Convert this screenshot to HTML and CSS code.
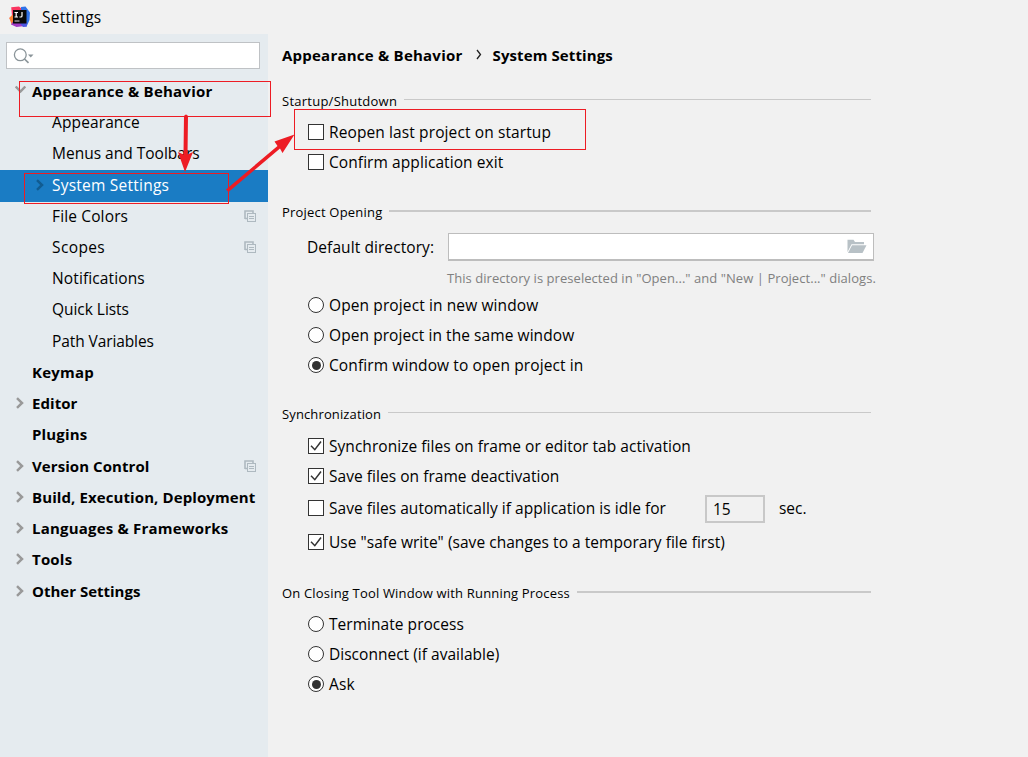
FILE: index.html
```html
<!DOCTYPE html>
<html lang="en">
<head>
<meta charset="utf-8">
<title>Settings</title>
<link rel="stylesheet" href="styles.css">
</head>
<body>
<svg class="defs" width="0" height="0">
  <symbol id="chev" viewBox="0 0 8 12"><path d="M1 1.2 6 6 1 10.8" fill="none" stroke="currentColor" stroke-width="2.5"/></symbol>
  <symbol id="copy" viewBox="0 0 12 12"><path d="M1 9V1H9V3M1 8.500H3" fill="none" stroke="currentColor" stroke-width="1.6"/><rect x="3.5" y="3.5" width="8" height="8" fill="none" stroke="currentColor" stroke-width="1"/><path d="M5 6.500h5M5 8.500h5" stroke="currentColor" stroke-width="1"/></symbol>
  <symbol id="tick" viewBox="0 0 14 14"><path d="M2 6.800 5.800 10.700 12 2.500" fill="none" stroke="#333" stroke-width="1.5"/></symbol>
</svg>
<div class="window">
  <header class="titlebar">
    <svg class="logo" viewBox="0 0 22 22" width="22" height="22">
      <path d="M2.2 1.2 10 .5l3 2.500-1 14-9-1.500L.3 12 3 10z" fill="#fb3560"/>
      <path d="M.3 12 3.500 8.500 6 16l-3.200 3z" fill="#fc8130"/>
      <path d="M12 1 16.500 .6 21 6.500 20.500 14 17.500 20.700 12 17z" fill="#2f72e8"/>
      <path d="M2 18.600 5 14h10l1 6-8.500 1z" fill="#a13ac4"/>
      <path d="M10 16h8l-.5 4.700L14 21z" fill="#4d57e0"/>
      <rect x="4" y="4" width="13.500" height="13.500" fill="#090909"/>
      <path d="M5.500 6.500h3.500M7.200 6.500v4.500M5.500 11h3.500M13 6v4q0 1-1.200 1h-1.300" fill="none" stroke="#fff" stroke-width="1.200"/>
      <path d="M5.500 15h5" stroke="#ddd" stroke-width="1"/>
    </svg>
    <span class="t-settings">Settings</span>
  </header>
  <div class="body">
    <nav class="sidebar">
      <div class="search">
        <svg width="22" height="18" viewBox="0 0 22 18"><circle cx="7.300" cy="7.800" r="5.900" fill="none" stroke="#8a9499" stroke-width="1.300"/><path d="m11.500 12 4 3.800" stroke="#8a9499" stroke-width="1.700"/><path d="M15 7.500h5.500l-2.750 3z" fill="#8a9499"/></svg>
      </div>
      <ul class="tree">
        <li class="top"><svg class="arrow open"><use href="#chev"/></svg><span class="t-ab">Appearance &amp; Behavior</span></li>
        <li class="sub"><span class="t-app">Appearance</span></li>
        <li class="sub"><span class="t-menus">Menus and Toolbars</span></li>
        <li class="sub selected"><svg class="arrow"><use href="#chev"/></svg><span class="t-sys">System Settings</span></li>
        <li class="sub"><span class="t-file">File Colors</span><svg class="copy"><use href="#copy"/></svg></li>
        <li class="sub"><span class="t-scopes">Scopes</span><svg class="copy"><use href="#copy"/></svg></li>
        <li class="sub"><span class="t-notif">Notifications</span></li>
        <li class="sub"><span class="t-quick">Quick Lists</span></li>
        <li class="sub"><span class="t-path">Path Variables</span></li>
        <li class="top"><span class="t-keymap">Keymap</span></li>
        <li class="top"><svg class="arrow"><use href="#chev"/></svg><span class="t-editor">Editor</span></li>
        <li class="top"><span class="t-plugins">Plugins</span></li>
        <li class="top"><svg class="arrow"><use href="#chev"/></svg><span class="t-vc">Version Control</span><svg class="copy"><use href="#copy"/></svg></li>
        <li class="top"><svg class="arrow"><use href="#chev"/></svg><span class="t-build">Build, Execution, Deployment</span></li>
        <li class="top"><svg class="arrow"><use href="#chev"/></svg><span class="t-lang">Languages &amp; Frameworks</span></li>
        <li class="top"><svg class="arrow"><use href="#chev"/></svg><span class="t-tools">Tools</span></li>
        <li class="top"><svg class="arrow"><use href="#chev"/></svg><span class="t-other">Other Settings</span></li>
      </ul>
    </nav>
    <main class="content">
      <h1 class="crumbs"><span class="t-ab">Appearance &amp; Behavior</span><svg width="6" height="11" viewBox="0 0 6 11"><path d="M1 1 4.500 5.500 1 10" fill="none" stroke="#222" stroke-width="1.300"/></svg><span class="t-crumb">System Settings</span></h1>

      <section>
        <h2><span class="t-startup">Startup/Shutdown</span></h2>
        <div class="row"><i class="box"></i><span class="t-reopen">Reopen last project on startup</span></div>
        <div class="row"><i class="box"></i><span class="t-exit">Confirm application exit</span></div>
      </section>

      <section>
        <h2 class="thick"><span class="t-opening">Project Opening</span></h2>
        <div class="directory">
          <span class="t-dir">Default directory:</span>
          <div class="field"><svg width="20" height="15" viewBox="0 0 20 15"><path d="M.5 13V.8h6L8 3h9v2.200H4.500z" fill="#b8c1c6"/><path d="M5 6.200h14.500L15.500 14H1z" fill="#b8c1c6"/></svg></div>
        </div>
        <p class="hint"><span class="t-hint">This directory is preselected in "Open..." and "New | Project..." dialogs.</span></p>
        <div class="row"><i class="radio"></i><span class="t-new">Open project in new window</span></div>
        <div class="row"><i class="radio"></i><span class="t-same">Open project in the same window</span></div>
        <div class="row"><i class="radio on"></i><span class="t-confirm">Confirm window to open project in</span></div>
      </section>

      <section class="sync">
        <h2><span class="t-sync">Synchronization</span></h2>
        <div class="row"><i class="box"><svg><use href="#tick"/></svg></i><span class="t-syncfiles">Synchronize files on frame or editor tab activation</span></div>
        <div class="row"><i class="box"><svg><use href="#tick"/></svg></i><span class="t-deact">Save files on frame deactivation</span></div>
        <div class="row idle"><i class="box"></i><span class="t-idle">Save files automatically if application is idle for</span><div class="seconds"><span>15</span></div><span class="t-sec">sec.</span></div>
        <div class="row safe"><i class="box"><svg><use href="#tick"/></svg></i><span class="t-safe">Use "safe write" (save changes to a temporary file first)</span></div>
      </section>

      <section>
        <h2 class="thick"><span class="t-closing">On Closing Tool Window with Running Process</span></h2>
        <div class="row"><i class="radio"></i><span class="t-term">Terminate process</span></div>
        <div class="row"><i class="radio"></i><span class="t-disc">Disconnect (if available)</span></div>
        <div class="row"><i class="radio on"></i><span class="t-ask">Ask</span></div>
      </section>
    </main>
  </div>
  <svg class="marks" width="1028" height="757" viewBox="0 0 1028 757">
    <g fill="none" stroke="#ed1c24">
      <rect x="19.500" y="81.500" width="251" height="35"/>
      <rect x="24.500" y="173.500" width="204" height="30"/>
      <rect x="294.500" y="109.500" width="291" height="40"/>
    </g>
    <g fill="#ed1c24">
      <path d="M184 116q2-3 4 0l-.5 38.500 5.500-2.500-8 20-7-20 5.500 2.500z"/>
      <path d="m226 189.500 51.500-43.500-3-4.500 20-7-12 18.500-2.500-4.500-51.500 43.500z"/>
    </g>
  </svg>
</div>
</body>
</html>
```
FILE: styles.css
```css
* { box-sizing: border-box; }
body { margin: 0; background: #f1f1f1; color: #000; font: 15.5px/20px "Open Sans", "Noto Sans", sans-serif; }
.defs { position: absolute; }
.window { position: relative; width: 1028px; height: 757px; overflow: hidden; display: flex; flex-direction: column; }
.titlebar { height: 34px; display: flex; align-items: center; gap: 11px; padding-left: 9px; }
.body { flex: 1; display: flex; }
span { white-space: nowrap; }

.sidebar { width: 268px; background: #e5ebef; padding-top: 8px; }
.search { width: 254px; height: 27px; margin-left: 6px; padding: 4px 0 0 6px; border: 1px solid #bfc2c5; background: #fff; }
.search svg { display: block; }
.tree { list-style: none; margin: 7px 0 0; padding: 0; }
.tree li { height: 31.25px; display: flex; align-items: center; padding: 0 12.5px 2px 0; }
.tree .top { font-size: 15px; font-weight: 700; padding-left: 32px; }
.tree .sub { padding-left: 52px; }
.tree .selected { background: #1a7cc4; color: #fff; box-shadow: 0 1px #1a7cc4; padding-bottom: 1px; }
.arrow { width: 8px; height: 12px; margin: 0 8px 0 -16px; color: #999; flex: none; }
.selected .arrow { color: #115c91; }
.arrow.open { transform: translate(.5px, -1.5px) rotate(90deg); }
.copy { width: 12px; height: 12px; margin-left: auto; color: #aeb9c0; flex: none; }

.content { width: 608px; padding-left: 14px; }
.crumbs { display: flex; align-items: center; height: 43px; margin: 0 0 12px; padding-bottom: 2px; font-size: 15px; line-height: 20px; font-weight: 700; }
.crumbs svg { margin: 0 11px 0 13px; }
section { margin-bottom: 23px; }
h2 { display: flex; align-items: center; height: 24px; width: 589px; margin: 0 0 4px; font-size: 13px; font-weight: 400; }
h2::after { content: ""; flex: 1; height: 1px; margin: -4px 0 0 7px; background: #c9c9c9; }
h2.thick::after { height: 2px; margin-top: -2px; }
.row { display: flex; align-items: center; height: 30px; padding-left: 26px; }
.box, .radio { width: 16px; height: 16px; margin-right: 5px; border: 1px solid #333; background: #fff; flex: none; }
.box svg { display: block; width: 14px; height: 14px; }
.radio { border-radius: 50%; display: grid; place-items: center; }
.radio.on::after { content: ""; width: 9px; height: 9px; border-radius: 50%; background: #333; }
.sync { margin: -1px 0 22px; }
.sync h2 { margin-bottom: 5px; }
.idle, .safe { height: 34px; }
.idle { width: 525px; }
.seconds { width: 60px; height: 28px; margin: 1px 14px 0 39px; padding: 2px 0 0 6px; border: 2px solid #c8c8c8; }
.directory { display: flex; align-items: center; height: 28px; margin-top: 9px; padding-left: 25px; }
.field { width: 426px; height: 28px; margin-left: auto; margin-right: 2px; display: flex; align-items: center; justify-content: flex-end; padding-right: 6px; border: 1px solid #bdbdbd; border-bottom-width: 2px; background: #fff; }
.directory span { padding-bottom: 1px; }
.hint { height: 29px; margin: 0; padding: 7px 0 0 165px; color: #808080; font-size: 13px; }

/* label tracking */
.t-settings { letter-spacing: .25px; }
.t-ab { letter-spacing: .23px; }
.t-crumb, .t-build { letter-spacing: .1px; }
.t-app, .t-notif { letter-spacing: .12px; }
.t-sys { letter-spacing: .23px; }
.t-file { letter-spacing: .14px; }
.t-scopes { letter-spacing: .38px; }
.t-quick { letter-spacing: -.04px; }
.t-path { letter-spacing: -.1px; }
.t-keymap, .t-lang, .t-tools { letter-spacing: .2px; }
.t-plugins { letter-spacing: .15px; }
.t-editor, .t-vc { letter-spacing: .07px; }
.t-startup { letter-spacing: .25px; }
.t-opening { letter-spacing: .2px; }
.t-sync { letter-spacing: .13px; }
.t-closing { letter-spacing: .175px; }
.t-dir, .t-exit { letter-spacing: .08px; }
.t-hint { letter-spacing: .055px; }
.t-reopen, .t-new, .t-confirm { letter-spacing: .11px; }
.t-same { letter-spacing: .07px; }
.t-syncfiles, .t-deact, .t-idle, .t-safe, .t-term { letter-spacing: .04px; }
.t-disc { letter-spacing: .02px; }
.t-ask { letter-spacing: .2px; }

.marks { position: absolute; left: 0; top: 0; pointer-events: none; }
```
